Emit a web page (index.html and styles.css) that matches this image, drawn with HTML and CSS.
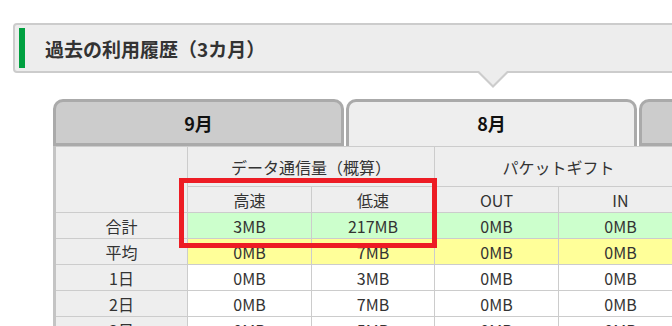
FILE: index.html
```html
<!DOCTYPE html>
<html>
<head>
  <meta charset="utf-8">
  <title>過去の利用履歴</title>
  <link rel="stylesheet" href="styles.css">
</head>
<body>
  <div class="page">
    <h2 class="heading"><span class="heading-bar"></span>過去の利用履歴（3カ月）</h2>

    <div class="tabs">
      <div class="tab">9月</div>
      <div class="tab active">8月</div>
      <div class="tab">7月</div>
    </div>

    <div class="panel">
      <table class="usage">
        <colgroup>
          <col class="col-label">
          <col class="col-wide">
          <col class="col-narrow">
          <col class="col-wide">
          <col class="col-wide">
        </colgroup>
        <tr class="head-top">
          <th rowspan="2"></th>
          <th colspan="2">データ通信量（概算）</th>
          <th colspan="2">パケットギフト</th>
        </tr>
        <tr class="head-sub">
          <th>高速</th>
          <th>低速</th>
          <th>OUT</th>
          <th>IN</th>
        </tr>
        <tr class="total">
          <th>合計</th>
          <td>3MB</td><td>217MB</td><td>0MB</td><td>0MB</td>
        </tr>
        <tr class="average">
          <th>平均</th>
          <td>0MB</td><td>7MB</td><td>0MB</td><td>0MB</td>
        </tr>
        <tr>
          <th>1日</th>
          <td>0MB</td><td>3MB</td><td>0MB</td><td>0MB</td>
        </tr>
        <tr>
          <th>2日</th>
          <td>0MB</td><td>7MB</td><td>0MB</td><td>0MB</td>
        </tr>
        <tr>
          <th>3日</th>
          <td>0MB</td><td>5MB</td><td>0MB</td><td>0MB</td>
        </tr>
      </table>
      <div class="mark"></div>
    </div>
  </div>
</body>
</html>
```

FILE: styles.css
```css
/* usage history page */
html, body {
  margin: 0;
  overflow: hidden;
  background-color: #fff;
}

.page {
  width: 1000px;
  padding: 23px 0 0 13px;
  font-family: "Noto Sans CJK JP", "Noto Sans", sans-serif;
  color: #333;
}

/* section heading with the green marker */
.heading {
  position: relative;
  display: flex;
  align-items: center;
  height: 46px;
  margin: 0;
  padding-left: 4px;
  border: 2px solid #ccc;
  border-radius: 4px;
  background-color: #ededed;
  font-size: 19px;
  font-weight: bold;
  line-height: 1;
}

.heading-bar {
  width: 6px;
  height: 40px;
  margin-right: 20px;
  background-color: #00a040;
}

/* little arrow under the heading */
.heading::before,
.heading::after {
  content: "";
  position: absolute;
  top: 100%;
  width: 0;
  height: 0;
}

.heading::before {
  left: 461px;
  border-left: 17px solid transparent;
  border-right: 17px solid transparent;
  border-top: 17px solid #ccc;
}

.heading::after {
  left: 464px;
  border-left: 14px solid transparent;
  border-right: 14px solid transparent;
  border-top: 14px solid #ededed;
}

/* month tabs */
.tabs {
  display: flex;
  gap: 2px;
  margin: 26px 0 0 40px;
}

.tab {
  box-sizing: border-box;
  width: 291px;
  height: 47px;
  padding-top: 9px;
  border: 3px solid #aaa;
  border-radius: 10px 10px 0 0;
  background-color: #ccc;
  color: #111;
  font-size: 18px;
  font-weight: bold;
  line-height: 24px;
  text-align: center;
}

.tab.active {
  border-bottom: none;
  background-color: #eee;
}

/* usage table */
.panel {
  position: relative;
  margin-left: 40px;
}

.usage {
  table-layout: fixed;
  border-collapse: collapse;
  border-left: 3px solid #c4c4c4;
  font-size: 16px;
  line-height: 20px;
}

.col-label {
  width: 133px;
}

.col-wide {
  width: 124px;
}

.col-narrow {
  width: 123px;
}

.usage th,
.usage td {
  height: 25px;
  padding: 0;
  border: 1px solid #ccc;
  font-weight: normal;
  text-align: center;
}

.usage th {
  background-color: #eee;
}

.usage td {
  background-color: #fff;
}

.head-top th {
  height: 39px;
}

.usage .total td {
  background-color: #ccffcc;
}

.usage .average td {
  background-color: #ffff99;
}

/* red frame drawn over the speed columns */
.mark {
  position: absolute;
  left: 126px;
  top: 32px;
  width: 248px;
  height: 60px;
  border: 5px solid #ed1c24;
}
```
